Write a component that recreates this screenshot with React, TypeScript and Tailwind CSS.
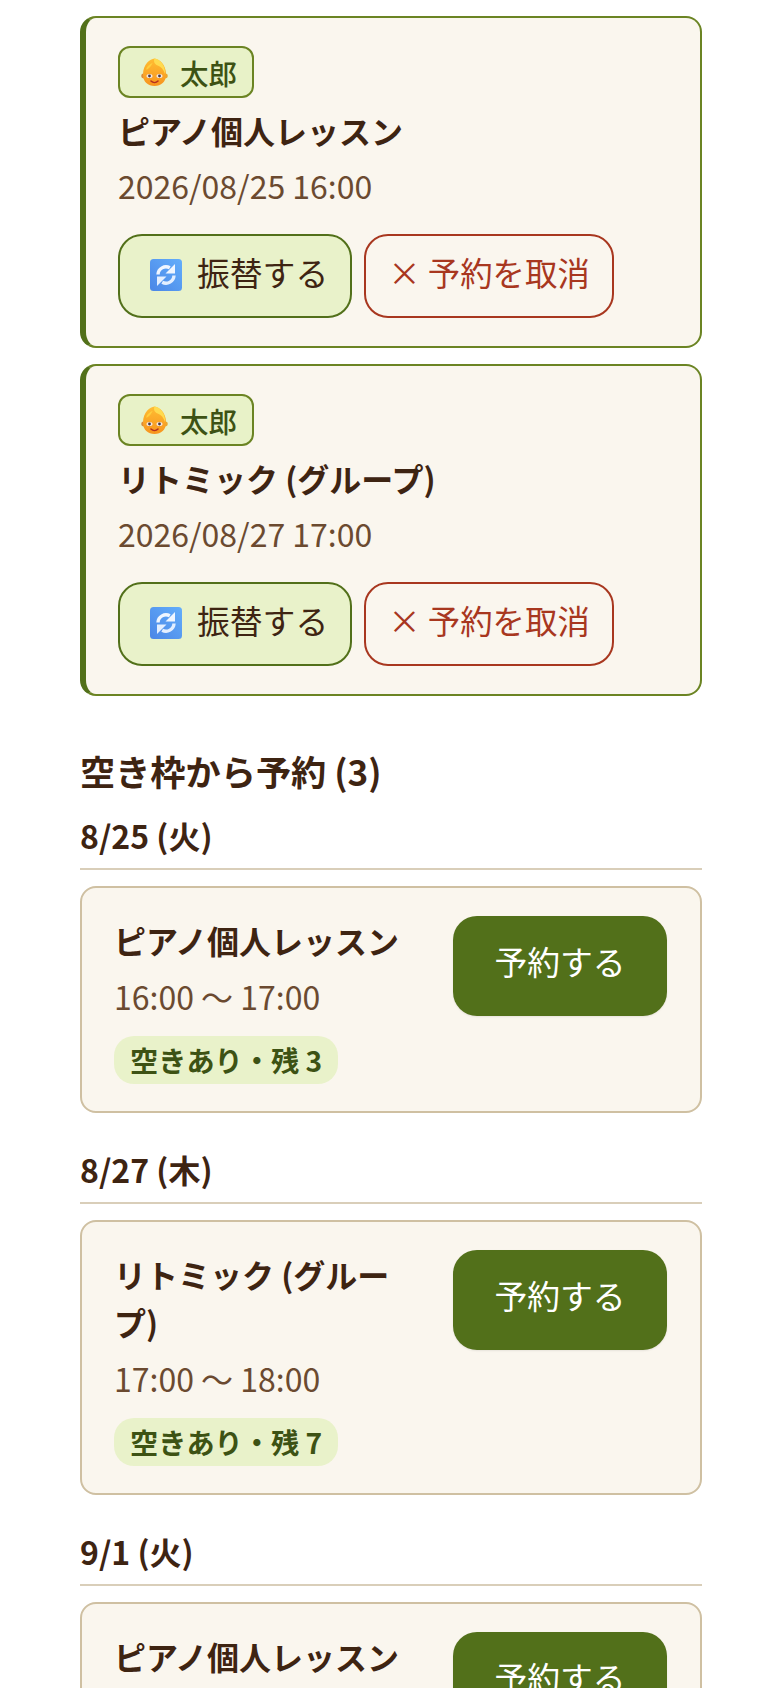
function BabyIcon() {
  return (
    <svg width="27" height="30" viewBox="0 0 27 30" aria-hidden="true" className="shrink-0">
      <defs>
        <linearGradient id="babyFace" x1="0" y1="0" x2="0" y2="1">
          <stop offset="0" stopColor="#ffbd33" />
          <stop offset="1" stopColor="#f7941e" />
        </linearGradient>
      </defs>
      <circle cx="2.600" cy="19" r="2.400" fill="#d98a3a" />
      <circle cx="24.400" cy="19" r="2.400" fill="#eaa62f" />
      <path d="M13.500 1.500C9 2 2 7 2 17.500 2 25 7 29 13.500 29S25 25 25 17.500C25 7 18 2 13.500 1.500Z" fill="url(#babyFace)" />
      <path d="M13.500 1.500c-1.200 3 0 5.800 3.200 6.900 3.400 1.200 6 4.200 7.200 8.600C25 9 19 2 13.500 1.500Z" fill="#ffdb4f" />
      <path d="M5.500 11c1.900-2.800 4-4.500 6.200-5-1.500 3-3.300 5.300-6.200 7Z" fill="#ffce3f" />
      <ellipse cx="8.500" cy="19" rx="3" ry="2.100" fill="#f6e9e4" />
      <ellipse cx="18.500" cy="19" rx="3" ry="2.100" fill="#f6e9e4" />
      <circle cx="8.500" cy="19" r="1.400" fill="#4a3a44" />
      <circle cx="18.500" cy="19" r="1.400" fill="#4a3a44" />
      <path d="M10 24c2 2 5 2 7 0" fill="none" stroke="#b5301f" strokeWidth="1.600" strokeLinecap="round" />
    </svg>
  );
}

function RefreshIcon() {
  return (
    <svg width="32" height="32" viewBox="0 0 32 32" aria-hidden="true" className="mb-[2px] shrink-0">
      <defs>
        <linearGradient id="refreshBg" x1="1" y1="0" x2="0" y2="1">
          <stop offset="0" stopColor="#63aefb" />
          <stop offset="1" stopColor="#4b86e6" />
        </linearGradient>
      </defs>
      <rect width="32" height="32" rx="3.500" fill="url(#refreshBg)" />
      <path d="M8 15.500a8 8 0 0 1 11.800-6.700" fill="none" stroke="#f0f6ff" strokeWidth="3.400" />
      <path d="M25 5v9.500h-9.500Z" fill="#f0f6ff" />
      <path d="M24 16.500a8 8 0 0 1-11.800 6.700" fill="none" stroke="#e4efff" strokeWidth="3.400" />
      <path d="M7 27v-9.500h9.500Z" fill="#e4efff" />
    </svg>
  );
}

function Booked({ title, date }: { title: string; date: string }) {
  return (
    <div className="rounded-[16px] border-2 border-l-[6px] border-[#6b8423] border-l-[#52701a] bg-[#faf6ee] pt-[28px] pr-[32px] pb-[28px] pl-[32px]">
      <div className="flex h-[52px] w-[136px] items-center gap-[12px] rounded-[12px] border-2 border-[#6b8423] bg-[#e8f2c8] pl-[21px] text-[28.5px] font-medium text-[#3d5214]">
        <BabyIcon />
        <span className="pt-[2px]">太郎</span>
      </div>
      <div className="mt-[7px] text-[32px] leading-[50px] font-bold text-[#3e2412]">{title}</div>
      <div className="mt-[5px] text-[32px] leading-[50px] text-[#6b4a30]">{date}</div>
      <div className="mt-[24px] flex gap-[12px]">
        <button className="flex h-[84px] w-[234px] items-center gap-[15px] rounded-[24px] border-2 border-[#52701a] bg-[#e9f2ca] pl-[30px] text-[32.8px] text-[#3e2412]">
          <RefreshIcon />
          <span className="pb-[8px]">振替する</span>
        </button>
        <button className="flex h-[84px] w-[250px] items-center justify-center rounded-[24px] border-2 border-[#a8371f] pb-[8px] text-[32.4px] text-[#a8371f]">
          × 予約を取消
        </button>
      </div>
    </div>
  );
}

function Slot({ day, title, time, left }: { day: string; title: string; time: string; left: string }) {
  return (
    <div>
      <div className="border-b-2 border-[#d9ceb9] pb-[9px] text-[32px] leading-[48px] font-bold text-[#3e2412]">{day}</div>
      <div className="mt-[16px] flex items-start justify-between gap-[32px] rounded-[16px] border-2 border-[#cfc0a2] bg-[#faf6ee] pt-[28px] pr-[33px] pb-[27px] pl-[32px]">
        <div className="min-w-0 flex-1">
          <div className="text-[32px] leading-[48px] font-bold text-[#3e2412]">{title}</div>
          <div className="mt-[8px] text-[32px] leading-[48px] text-[#6b4a30]">{time}</div>
          <div className="mt-[16px] inline-block rounded-[20px] bg-[#e9f2ca] px-[16px] py-[4px] text-[28.2px] leading-[40px] font-bold text-[#3d5214]">{left}</div>
        </div>
        <button className="h-[100px] w-[214px] shrink-0 rounded-[24px] bg-[#52701a] pb-[10px] text-[32.8px] text-white shadow-[0_1px_2px_rgba(0,0,0,0.08)]">予約する</button>
      </div>
    </div>
  );
}

export default function App() {
  return (
    <div className="h-[1688px] overflow-hidden bg-white px-[80px] pt-[16px] font-['Noto_Sans_CJK_JP',sans-serif]">
      <div className="w-[622px]">
        <div className="flex flex-col gap-[16px]">
          <Booked title="ピアノ個人レッスン" date="2026/08/25 16:00" />
          <Booked title="リトミック (グループ)" date="2026/08/27 17:00" />
        </div>
        <h2 className="mt-[48px] text-[35.2px] leading-[54px] font-bold text-[#3e2412]">空き枠から予約 (3)</h2>
        <div className="mt-[13px] flex flex-col gap-[32px]">
          <Slot day="8/25 (火)" title="ピアノ個人レッスン" time="16:00 〜 17:00" left="空きあり・残 3" />
          <Slot day="8/27 (木)" title="リトミック (グループ)" time="17:00 〜 18:00" left="空きあり・残 7" />
          <Slot day="9/1 (火)" title="ピアノ個人レッスン" time="16:00 〜 17:00" left="空きあり・残 3" />
        </div>
      </div>
    </div>
  );
}
